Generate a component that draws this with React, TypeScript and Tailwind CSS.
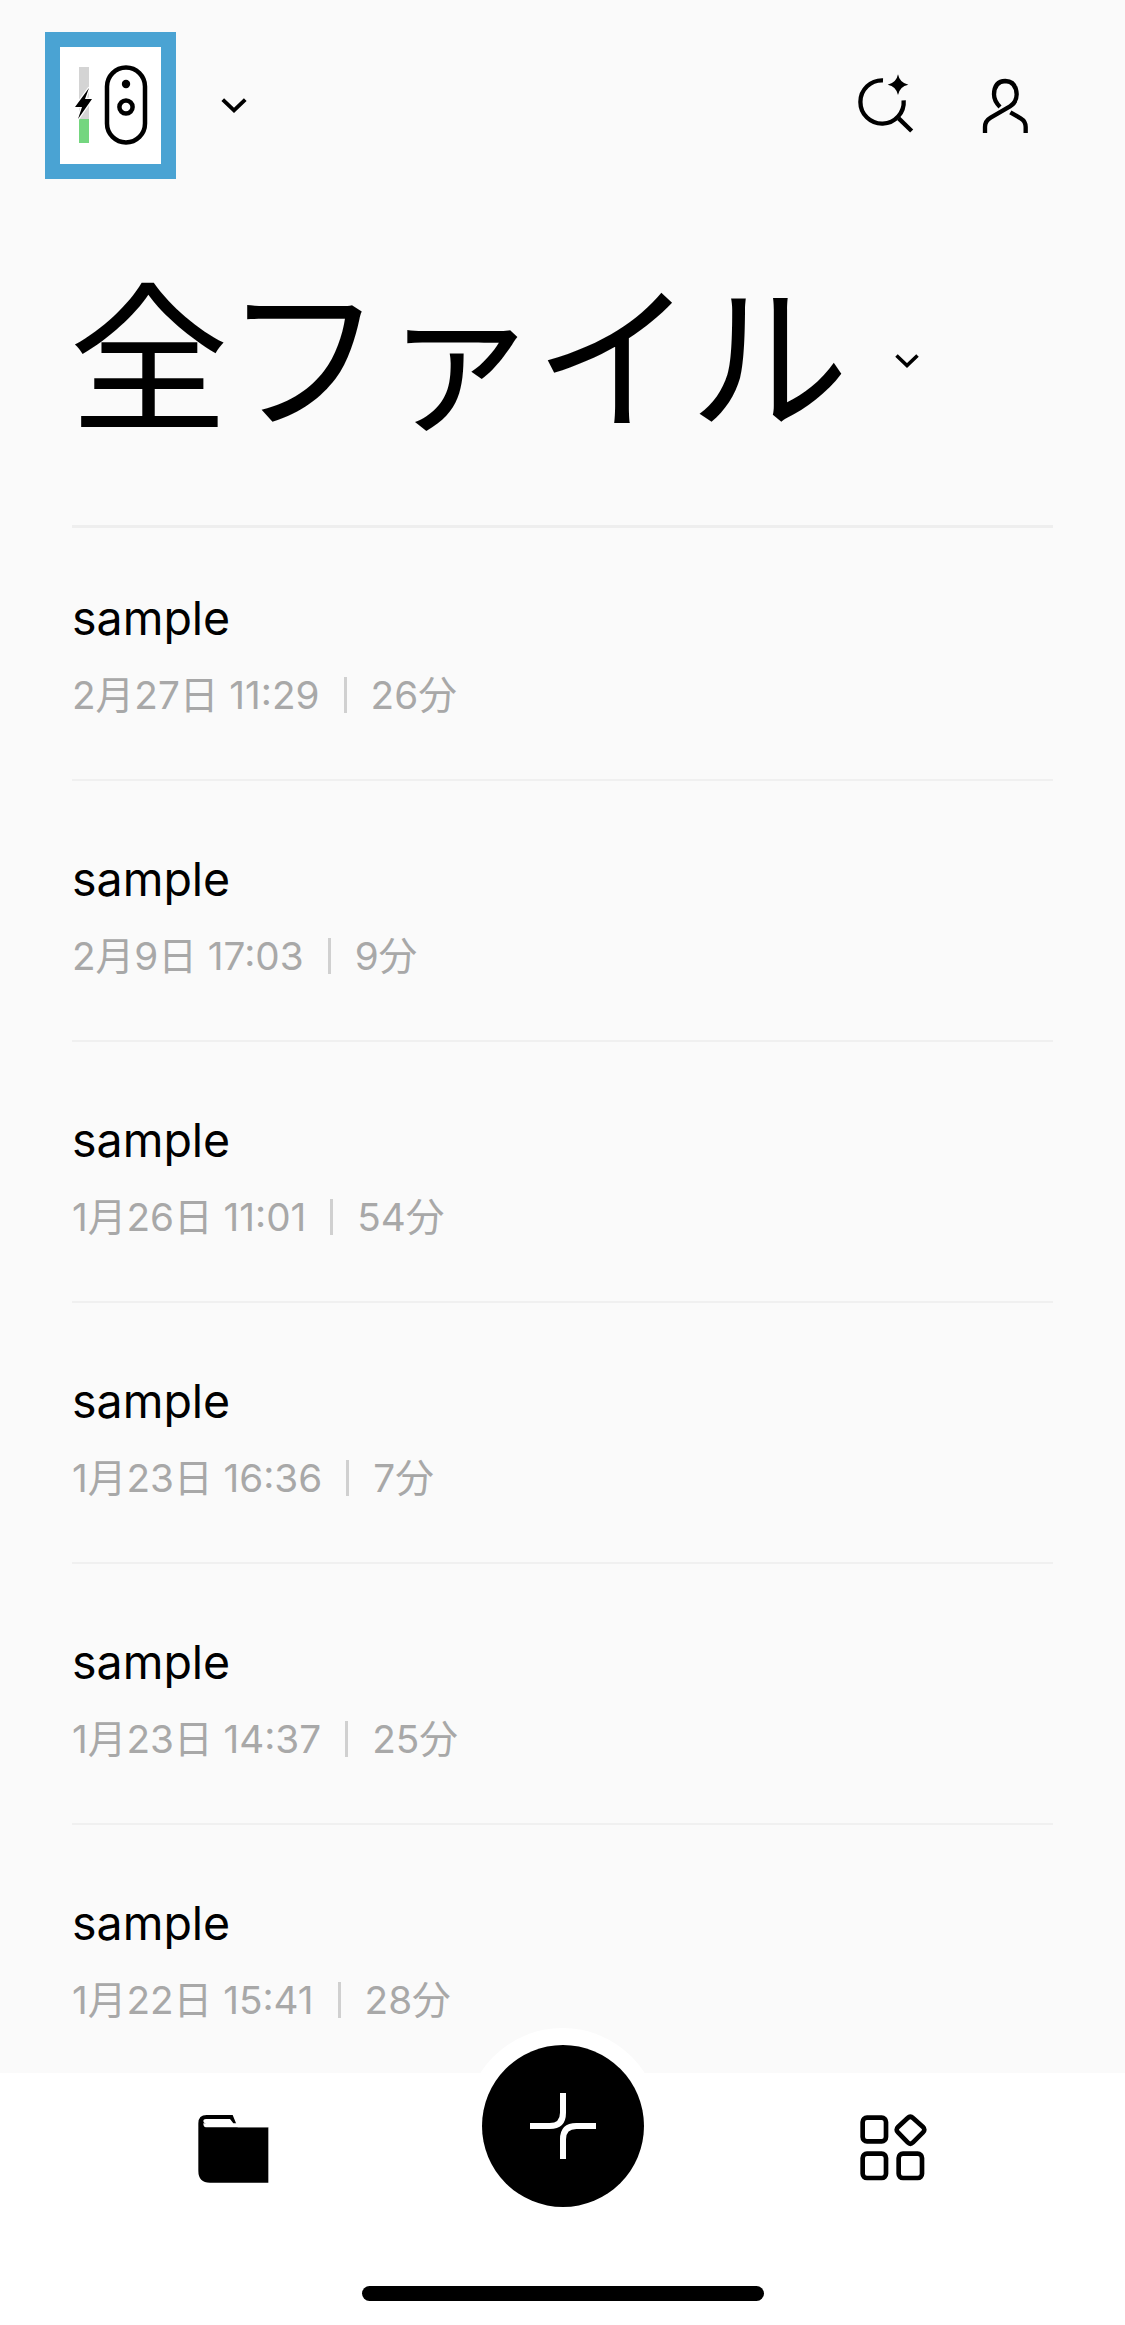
import React from "react";

const files = [
  { date: "2月27日 11:29", length: "26分" },
  { date: "2月9日 17:03", length: "9分" },
  { date: "1月26日 11:01", length: "54分" },
  { date: "1月23日 16:36", length: "7分" },
  { date: "1月23日 14:37", length: "25分" },
  { date: "1月22日 15:41", length: "28分" },
];

const Chevron = ({ className }: { className: string }) => (
  <svg className={className} viewBox="0 0 24 14" fill="none" stroke="currentColor" strokeWidth={3.6}>
    <path d="M1.5 1.5 12 11.5 22.5 1.5" />
  </svg>
);

const DeviceLogo = () => (
  <div className="w-[131px] h-[147px] border-[15px] border-[#4aa3d3] bg-white shrink-0">
    <svg className="w-[101px] h-[117px]" viewBox="60 47 101 117" fill="none">
      <rect x="79" y="67" width="10" height="53" fill="#d4d4d4" />
      <rect x="79" y="119" width="10" height="24" fill="#74d67f" />
      <path d="M89 88 75 107h7l-4 12 14-20h-7z" fill="#000" stroke="#fff" strokeWidth={2.5} strokeLinejoin="round" paintOrder="stroke" />
      <rect x="107" y="67.5" width="38" height="75" rx="19" stroke="#000" strokeWidth={4.5} />
      <circle cx="126" cy="84" r="4.2" fill="#000" />
      <circle cx="126" cy="107" r="6.6" stroke="#000" strokeWidth={4.5} />
    </svg>
  </div>
);

const SearchSpark = () => (
  <svg className="w-[60px] h-[70px]" viewBox="90 90 180 210" fill="none" stroke="#000" strokeWidth={13}>
    <path d="M171 118A65 65 0 1 0 233 178" />
    <path d="M218 232 257 270" />
    <path d="M216 100Q221 126 247 131 221 136 216 162 211 136 185 131 211 126 216 100Z" fill="#000" stroke="none" />
  </svg>
);

const UserIcon = () => (
  <svg className="w-[60px] h-[70px]" viewBox="450 90 180 210" fill="none" stroke="#000" strokeWidth={13}>
    <path d="M477 276V258Q477 240 494 230L552 196Q572 184 572 160 570 121 538 120 505 121 504 160 504 180 522 198" />
    <path d="M553 214 584 232Q599 241 599 258V276" />
  </svg>
);

const FolderIcon = () => (
  <svg className="w-[120px] h-[120px]" viewBox="0 0 360 360">
    <path d="M85 130Q85 105 110 105H188L203 142H295V308H120Q85 308 85 272Z" fill="#000" />
    <path d="M108 117H180L190 130H108Q100 130 100 124 100 117 108 117ZM108 130H295V142H108Q100 142 100 130Z" fill="#fff" />
  </svg>
);

const PlusIcon = () => (
  <svg className="w-[68px] h-[68px]" viewBox="0 0 204 204" fill="none" stroke="#fff" strokeWidth={18}>
    <path d="M102 3V62Q102 102 62 102H3" />
    <path d="M201 102H142Q102 102 102 142V201" />
  </svg>
);

const AppsIcon = () => (
  <svg className="w-[110px] h-[110px] mt-[10px]" viewBox="0 0 330 330" fill="none" stroke="#000" strokeWidth={14}>
    <rect x="68" y="83" width="70" height="71" rx="13" />
    <rect x="68" y="191" width="70" height="73" rx="13" />
    <rect x="176" y="191" width="70" height="73" rx="13" />
    <path d="M203 84Q211 76 219 84L249 111Q257 119 249 127L219 157Q211 165 203 157L174 127Q166 119 174 111Z" />
  </svg>
);

const FileRow = ({ date, length }: { date: string; length: string }) => (
  <div className="h-[261px] shrink-0 border-b-2 border-[#f0f0f0] pt-[68px]">
    <div className="text-[46.5px] leading-[60px] text-black">sample</div>
    <div className="mt-[22px] flex items-center text-[38.7px] leading-[50px] text-[#a8a8a8]">
      <span>{date}</span>
      <span className="mx-[24px] w-[3px] h-[36px] bg-[#d0d0d0]" />
      <span>{length}</span>
    </div>
  </div>
);

export default function App() {
  return (
    <div className="relative w-[1125px] h-[2325px] overflow-hidden bg-[#fafafa] flex flex-col font-['Inter','Noto_Sans_CJK_JP',sans-serif]">
      <header className="h-[178px] shrink-0 pt-[32px] pl-[45px] pr-[89px] flex items-start">
        <DeviceLogo />
        <Chevron className="w-[26px] h-[15px] ml-[45px] mt-[66px]" />
        <div className="ml-auto flex mt-[39px] gap-[60px]">
          <SearchSpark />
          <UserIcon />
        </div>
      </header>

      <div className="h-[350px] shrink-0 mx-[72px] border-b-[3px] border-[#eeeeee] flex items-start">
        <h1 className="mt-[80px] -ml-[3px] text-[160px] tracking-[-5px] leading-[180px] font-normal text-black whitespace-nowrap font-['Noto_Sans_CJK_JP',sans-serif]">
          全ファイル
        </h1>
        <Chevron className="w-[24px] h-[14px] ml-[51px] mt-[176px]" />
      </div>

      <main className="flex-1 -mt-[8px] mx-[72px] overflow-hidden">
        {files.map((f) => (
          <FileRow key={f.date} date={f.date} length={f.length} />
        ))}
      </main>

      <nav className="h-[252px] shrink-0 bg-white flex flex-col">
        <div className="flex items-start justify-between pl-[170px] pr-[175px] pt-[7px]">
          <FolderIcon />
          <AppsIcon />
        </div>
        <div className="mt-auto mb-[24px] mx-auto w-[402px] h-[15px] rounded-full bg-black" />
      </nav>

      <div className="absolute left-[465px] top-[2028px] w-[195px] h-[195px] rounded-full bg-white flex items-center justify-center">
        <div className="w-[162px] h-[162px] rounded-full bg-black flex items-center justify-center">
          <PlusIcon />
        </div>
      </div>
    </div>
  );
}
